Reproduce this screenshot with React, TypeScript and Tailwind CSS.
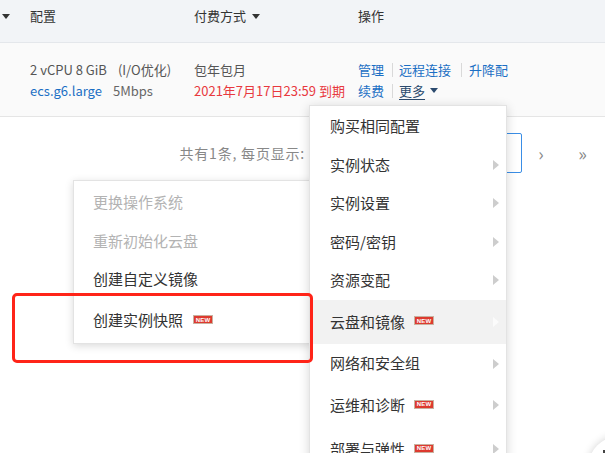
import React from "react";

function CaretDown({ color = "border-t-[#333]" }: { color?: string }) {
  return (
    <span
      className={`inline-block w-0 h-0 border-l-[4px] border-r-[4px] border-t-[5px] border-l-transparent border-r-transparent ${color}`}
    />
  );
}

function ArrowRight({ light }: { light?: boolean }) {
  return (
    <span
      className={
        light
          ? "inline-block w-0 h-0 border-t-[5px] border-b-[5px] border-l-[6px] border-t-transparent border-b-transparent border-l-[#fbfbfb]"
          : "inline-block w-0 h-0 border-t-[5px] border-b-[5px] border-l-[6px] border-t-transparent border-b-transparent border-l-[#cdcdcd]"
      }
    />
  );
}

function NewBadge() {
  return (
    <span className="relative -top-[1px] inline-flex items-center justify-center w-[20px] h-[9px] bg-[#dd3a2f] border border-[#c9b1a0] text-white text-[6px] font-bold leading-none tracking-[0.2px] font-['Liberation_Sans',sans-serif]">
      NEW
    </span>
  );
}

function Sep() {
  return <span className="inline-block w-px h-[14px] bg-[#d9d9d9] ml-[8px] mr-[6px]" />;
}

type Item = { label: string; arrow?: boolean; isNew?: boolean; h: string; active?: boolean };

const mainItems: Item[] = [
  { label: "购买相同配置", h: "h-[38.5px]" },
  { label: "实例状态", arrow: true, h: "h-[38.5px]" },
  { label: "实例设置", arrow: true, h: "h-[38.5px]" },
  { label: "密码/密钥", arrow: true, h: "h-[38.5px]" },
  { label: "资源变配", arrow: true, h: "h-[38.5px]" },
  { label: "云盘和镜像", arrow: true, isNew: true, h: "h-[44.5px]", active: true },
  { label: "网络和安全组", arrow: true, h: "h-[39px]" },
  { label: "运维和诊断", arrow: true, isNew: true, h: "h-[44px]" },
  { label: "部署与弹性", arrow: true, isNew: true, h: "h-[44px]" },
];

const subItems: { label: string; disabled?: boolean; isNew?: boolean; h: string }[] = [
  { label: "更换操作系统", disabled: true, h: "h-[39px]" },
  { label: "重新初始化云盘", disabled: true, h: "h-[39px]" },
  { label: "创建自定义镜像", h: "h-[38px]" },
  { label: "创建实例快照", isNew: true, h: "h-[44px]" },
];

export default function App() {
  return (
    <div className="relative w-[605px] h-[453px] overflow-hidden bg-white font-['Noto_Sans_CJK_SC','Microsoft_YaHei',sans-serif] text-[13px] text-[#333]">
      {/* table header */}
      <div className="flex h-[43px] pt-[7px] bg-[#f2f4f7] border-b border-[#e4e7eb] leading-[18px]">
        <div className="w-[30px] h-[18px] flex items-center">
          <span className="ml-[2px] flex">
            <CaretDown />
          </span>
        </div>
        <div className="w-[164px]">配置</div>
        <div className="w-[164px] h-[18px] flex items-center">
          付费方式
          <span className="ml-[6px] flex">
            <CaretDown />
          </span>
        </div>
        <div>操作</div>
      </div>

      {/* data row */}
      <div className="flex h-[74px] pt-[17px] bg-[#fafafa] border-b border-[#e5e5e5] leading-[20.5px]">
        <div className="w-[30px]" />
        <div className="w-[164px]">
          <div className="text-[#555]">
            2 vCPU 8 GiB<span className="ml-[11px]">(I/O优化)</span>
          </div>
          <div>
            <span className="text-[#1b6fc4]">ecs.g6.large</span>
            <span className="ml-[11px] text-[#666]">5Mbps</span>
          </div>
        </div>
        <div className="w-[164px]">
          <div className="text-[#555]">包年包月</div>
          <div className="text-[#e8393e]">2021年7月17日23:59 到期</div>
        </div>
        <div>
          <div className="flex items-center text-[#1b6fc4] h-[20.5px]">
            <span>管理</span>
            <Sep />
            <span>远程连接</span>
            <span className="inline-block w-px h-[14px] bg-[#d9d9d9] ml-[10px] mr-[7px]" />
            <span>升降配</span>
          </div>
          <div className="flex items-center text-[#1b6fc4] h-[20.5px]">
            <span>续费</span>
            <Sep />
            <span className="text-[#2b4a6e] underline underline-offset-[3px]">更多</span>
            <span className="ml-[5px] flex">
              <CaretDown color="border-t-[#2b4a6e]" />
            </span>
          </div>
        </div>
      </div>

      {/* pagination */}
      <div className="flex h-[72px] items-center justify-end">
        <span className="text-[#888] text-[14px] tracking-[0.8px]">共有1条, 每页显示:</span>
        <div className="ml-[7px] w-[210px] h-[40px] border border-[#3a8ee6] rounded-[2px] bg-white" />
        <span className="w-[38px] text-center text-[#888] text-[18px] leading-none">›</span>
        <span className="w-[45px] text-center text-[#888] text-[18px] leading-none">»</span>
      </div>

      {/* sub menu */}
      <div className="absolute left-[73px] top-[180px] w-[240px] pt-[1.5px] bg-white border border-[#e3e3e3] shadow-[0_2px_8px_rgba(0,0,0,0.15)] z-10 text-[15px]">
        {subItems.map((it) => (
          <div
            key={it.label}
            className={`${it.h} flex items-center pl-[19px] ${it.disabled ? "text-[#b3b3b3]" : "text-[#333]"}`}
          >
            <span>{it.label}</span>
            {it.isNew && (
              <span className="ml-[10px] flex">
                <NewBadge />
              </span>
            )}
          </div>
        ))}
      </div>

      {/* main menu */}
      <div className="absolute left-[309px] top-[105px] w-[198px] h-[380px] pt-px bg-white border border-[#e3e3e3] shadow-[0_2px_10px_rgba(0,0,0,0.16)] z-20 text-[15px]">
        {mainItems.map((it) => (
          <div
            key={it.label}
            className={`${it.h} flex items-center pl-[20px] pr-[7px] ${it.active ? "bg-[#f2f2f2]" : ""}`}
          >
            <span>{it.label}</span>
            {it.isNew && (
              <span className="ml-[9px] flex">
                <NewBadge />
              </span>
            )}
            {it.arrow && (
              <span className="ml-auto flex">
                <ArrowRight light={it.active} />
              </span>
            )}
          </div>
        ))}
      </div>

      {/* highlight box */}
      <div className="absolute left-[12px] top-[293px] w-[301px] h-[70px] border-[3px] border-[#ff2418] rounded-[5px] z-30" />

      {/* floating button (partially visible) */}
      <div className="absolute left-[588px] top-[436px] w-[64px] h-[64px] rounded-full bg-white shadow-[0_0_8px_rgba(0,0,0,0.18)] z-10">
        <span className="absolute left-[15px] top-[14px] w-[2px] h-[8px] bg-[#444]" />
      </div>
    </div>
  );
}
